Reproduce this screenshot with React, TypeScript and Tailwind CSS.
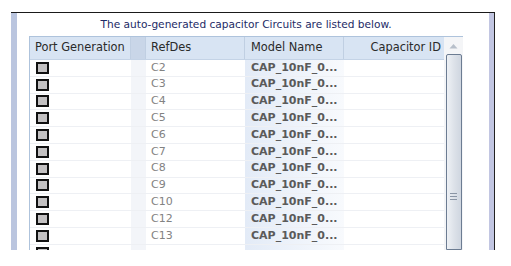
import React from 'react';

const rows = ['C2', 'C3', 'C4', 'C5', 'C6', 'C7', 'C8', 'C9', 'C10', 'C12', 'C13', ''];

function Checkbox() {
  return <div className="w-[13px] h-[12px] border-2 border-[#111] bg-[#c3c1c2]" />;
}

export default function App() {
  return (
    <div className="w-[511px] h-[266px] bg-white overflow-hidden relative" style={{ fontFamily: 'Tahoma, "DejaVu Sans", sans-serif' }}>
      <div className="absolute left-[11px] top-[12px] w-[484px] h-[238px] flex flex-col">
        <div className="h-[1px] bg-[#1a1a1a]" />
        <div className="flex flex-1 min-h-0">
          {/* left frame bar */}
          <div className="w-[6px] bg-[#bac5df]" />
          <div className="flex-1 flex flex-col pl-[12px] pr-[26px] min-w-0">
            <div className="h-[23px] flex items-center justify-center text-[10.6px] text-[#1d2b66]">
              The auto-generated capacitor Circuits are listed below.
            </div>
            {/* table */}
            <div className="flex-1 border-l border-t border-[#aec3dc] flex overflow-hidden">
              <div className="flex-1 flex flex-col">
                <div className="h-[23px] flex shrink-0 bg-[#d8e4f3] border-b border-[#c4d3e6] text-[11.4px] text-[#2a2a2a]">
                  <div className="w-[101px] pl-[5px] flex items-center border-r border-[#c0cfe2]">Port Generation</div>
                  <div className="w-[15px] bg-[#c9d6e8] border-r border-[#c0cfe2]" />
                  <div className="w-[99px] pl-[5px] flex items-center border-r border-[#c0cfe2]">RefDes</div>
                  <div className="w-[99px] pl-[6px] flex items-center border-r border-[#c0cfe2]">Model Name</div>
                  <div className="flex-1 pr-[3px] flex items-center justify-end">Capacitor ID</div>
                </div>
                {rows.map((r, i) => (
                  <div key={i} className="h-[16.8px] shrink-0 flex border-b border-[#eef0f4] text-[11px]">
                    <div className="w-[101px] pl-[6px] flex items-center bg-white">
                      <Checkbox />
                    </div>
                    <div className="w-[15px] bg-[#f3f5f9]" />
                    <div className="w-[99px] pl-[5px] flex items-center text-[#828282] bg-white">{r}</div>
                    <div className="w-[99px] pl-[6px] flex items-center font-bold text-[11px] text-[#5a5a5a] bg-gradient-to-r from-[#e3ebf7] to-[#f8fafd]">
                      {r ? 'CAP_10nF_0...' : ''}
                    </div>
                    <div className="flex-1 bg-white" />
                  </div>
                ))}
              </div>
              {/* scrollbar */}
              <div className="w-[19px] flex flex-col items-center bg-[#f4f5f7]">
                <div className="h-[17px] w-full flex items-end justify-center pb-[5px]">
                  <svg width="9" height="6" viewBox="0 0 9 6">
                    <path d="M0.5 5.5 L4.5 1 L8.5 5.5 Z" fill="#b7bfca" />
                  </svg>
                </div>
                <div className="flex-1 w-[16px] border border-[#6c7c92] rounded-t-[2px] bg-gradient-to-r from-[#eef1f5] via-[#dde2e9] to-[#cfd6e0] flex flex-col items-center pt-[138px]">
                  <div className="w-[7px] flex flex-col gap-[2px]">
                    <div className="h-[1px] bg-[#8a95a5]" />
                    <div className="h-[1px] bg-[#8a95a5]" />
                    <div className="h-[1px] bg-[#8a95a5]" />
                  </div>
                </div>
              </div>
            </div>
          </div>
          {/* right frame bar */}
          <div className="w-[6px] bg-[#c2c6e2] border-r border-[#222]" />
        </div>
      </div>
    </div>
  );
}
